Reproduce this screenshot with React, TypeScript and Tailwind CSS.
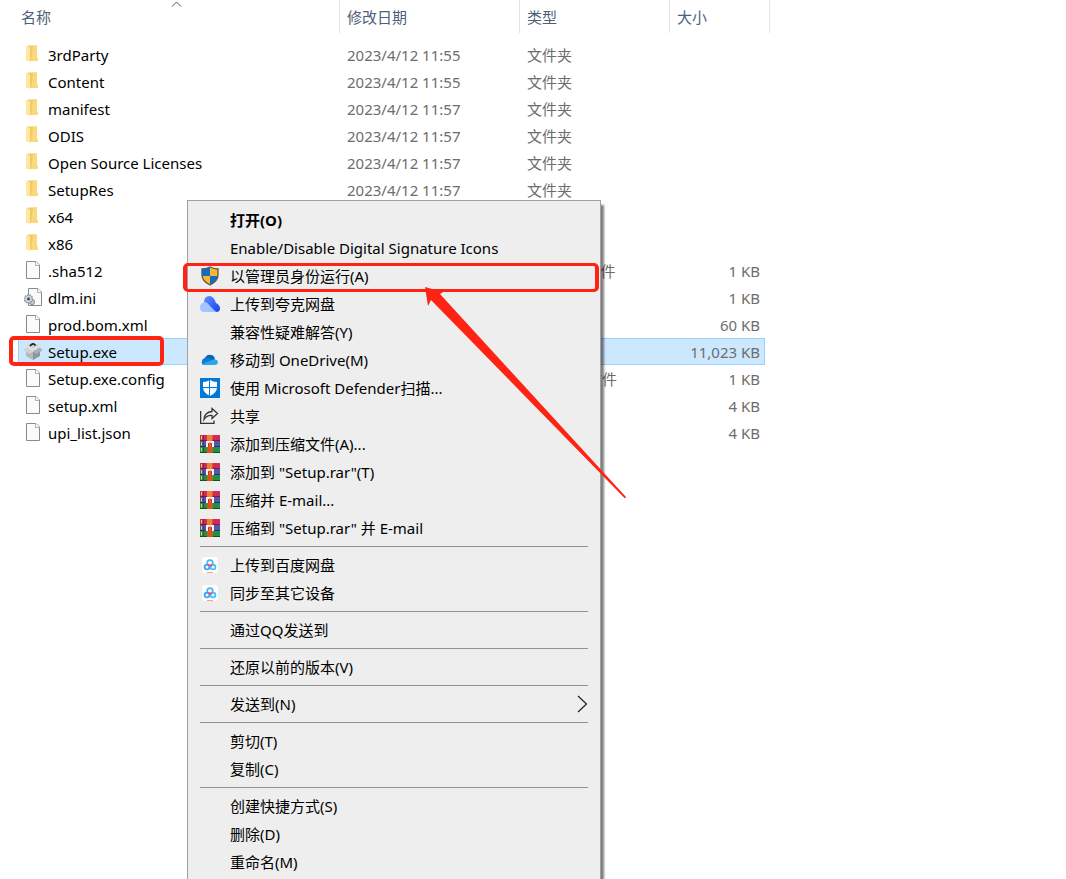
import { ReactNode } from "react";
import clsx from "clsx";

type FileRow = {
  name: string;
  icon: ReactNode;
  date: string;
  type: string;
  size?: string;
};

type MenuItem = {
  label: string;
  icon?: ReactNode;
  bold?: boolean;
  submenu?: boolean;
  marked?: boolean;
};

function FolderIcon() {
  return (
    <svg width="16" height="20" viewBox="0 0 16 20">
      <path d="M3 1.500h9v12l1 1.500v2H3z" fill="#f0ca68" />
      <path d="M8 1.500h4v12l1 1.500v2H6z" fill="#f9d97c" />
      <path d="M1 1.500l4 2v15l-1.500-1.500H1z" fill="#ffe7a0" />
    </svg>
  );
}

function PageIcon() {
  return (
    <svg width="16" height="20" viewBox="0 0 16 20">
      <path
        d="M1.5 1.5h9.5l3.5 3.5v13.5h-13z"
        fill="#fbfbfb"
        stroke="#8a8a8a"
      />
      <path d="M10.5 1.5v4h4" fill="#fff" stroke="#9a9a9a" strokeWidth="0.8" />
    </svg>
  );
}

function ConfigIcon() {
  return (
    <svg width="19" height="20" viewBox="-3 0 19 20">
      <path
        d="M1.5 1.5h9.5l3.5 3.5v13.5h-13z"
        fill="#fbfbfb"
        stroke="#8a8a8a"
      />
      <path d="M10.5 1.5v4h4" fill="#fff" stroke="#9a9a9a" strokeWidth="0.8" />
      <circle cx="5" cy="15" r="2.6" fill="#c6cdd3" stroke="#87919a" />
      <circle
        cx="1.5"
        cy="12"
        r="4"
        fill="#cfd6dc"
        stroke="#87919a"
        strokeWidth="1.5"
        strokeDasharray="1.6 0.8"
      />
      <circle cx="1.5" cy="12" r="1.4" fill="#3c4043" />
    </svg>
  );
}

function SetupIcon() {
  return (
    <svg width="20" height="20" viewBox="0 0 20 20">
      <path d="M3 4l7-3 7 3v4l-7 3-7-3z" fill="#dfe1e3" />
      <path d="M4 4.500l6 2.500 6-2.500-6-2.500z" fill="#c9cdd1" />
      <path d="M7 5q3-4 5.500-.5" fill="none" stroke="#1c1f22" strokeWidth="1.6" />
      <path d="M3 8l7 3v8l-7-4z" fill="#b4b9be" />
      <path d="M17 8l-7 3v8l7-4z" fill="#8e959c" />
      <path d="M3 6.500l7 3.500-3 3-6.500-3.500z" fill="#cdd1d5" />
      <path d="M17 6.500l-7 3.500 3 3 6.500-3.500z" fill="#a9b0b6" />
    </svg>
  );
}

function ShieldIcon() {
  return (
    <svg width="20" height="20" viewBox="0 0 20 20">
      <path d="M10 1q4 2 8 2v6q0 6-8 10z" fill="#ffb62b" />
      <path d="M10 1q-4 2-8 2v6q0 6 8 10z" fill="#0f6cc9" />
      <path d="M10 10h8q-1 5-8 9z" fill="#0f6cc9" />
      <path d="M10 10H2q1 5 8 9z" fill="#ffb62b" />
      <path
        d="M10 1q4 2 8 2v6q0 6-8 10-8-4-8-10V3q4 0 8-2z"
        fill="none"
        stroke="#565656"
        strokeWidth="1.3"
      />
    </svg>
  );
}

function QuarkIcon() {
  return (
    <svg width="20" height="20" viewBox="0 0 20 20">
      <defs>
        <linearGradient id="quark" x1="0" y1="0" x2="1" y2="1">
          <stop offset="0" stopColor="#5a93ff" />
          <stop offset="1" stopColor="#1d3df5" />
        </linearGradient>
      </defs>
      <path
        d="M4 9q0-7 5.500-7 4 0 6.500 7 4 2 4 5.500 0 3.500-4 3.500l-5-3z"
        fill="url(#quark)"
      />
      <path d="M4.500 8q3 0 5.500 4l6 6H4q-4 0-4-4.500Q0 9 4.500 8z" fill="#a5c4ff" />
    </svg>
  );
}

function OneDriveIcon() {
  return (
    <svg width="20" height="20" viewBox="0 0 20 20">
      <path d="M5 8q2-4 6-3 3 0 4 4l-7 6H4q-2-1-2-3 0-3 3-4z" fill="#0866b9" />
      <path d="M5 8q3-1 5 1l4 2-11 4q-2-2-1-4 1-3 3-3z" fill="#0f7cd5" />
      <path d="M12 10q5-2 6 2 0 3-4 3H5q-2 0-2.500-1z" fill="#28a8ea" />
    </svg>
  );
}

function DefenderIcon() {
  return (
    <svg width="20" height="20" viewBox="0 0 20 20">
      <path d="M0 0h20v20H0z" fill="#0078d7" />
      <path d="M10 2q3 2 7 2v5q0 6-7 9-7-3-7-9V4q4 0 7-2z" fill="#fff" />
      <path d="M9.500 2v16M3 9.500h14" stroke="#0078d7" />
    </svg>
  );
}

function ShareIcon() {
  return (
    <svg
      width="20"
      height="20"
      viewBox="0 0 20 20"
      fill="none"
      stroke="#333"
      strokeWidth="1.3"
    >
      <path d="M.6 5v12.4h13.400V14.500" />
      <path d="M12 2.500l5.500 5-5.500 5V9.500q-5-.5-8 4 .5-7.500 8-8z" />
    </svg>
  );
}

function RarIcon() {
  return (
    <svg width="20" height="20" viewBox="0 0 20 20">
      <path d="M0 1h20v5H0z" fill="#cf2b55" />
      <path d="M0 7h20v5H0z" fill="#5554b5" />
      <path d="M0 13h20v5H0z" fill="#1b9444" />
      <path d="M0 6h20v1H0z" fill="#8c1238" />
      <path d="M0 12h20v1H0z" fill="#2e2d72" />
      <path d="M0 18h20v1H0z" fill="#0e5226" />
      <path d="M3.500 1v17" stroke="#2b2540" strokeOpacity="0.5" />
      <path d="M1.500 2v3.500M1.500 8v3.500M1.500 14v3.500" stroke="#f5d02f" />
      <path d="M7 1h5.500v18H7z" fill="#f08030" />
      <path d="M7 13h5.500v6H7z" fill="#d9541c" />
      <path d="M6 7h8v6H6z" fill="#f3f3f3" />
      <path d="M8 9h1v4H8zM11 9h1v4h-1z" fill="#c9332a" />
      <path d="M9 8.500h2V13H9z" fill="#e0612a" />
    </svg>
  );
}

function BaiduIcon() {
  return (
    <svg width="20" height="20" viewBox="0 0 20 20" fill="none">
      <rect x="2" y="2" width="16" height="16" rx="3" fill="#fff" />
      <circle cx="10" cy="8" r="2.8" stroke="#45b7f7" strokeWidth="1.7" />
      <circle cx="7" cy="12" r="2.4" stroke="#38a4f8" strokeWidth="1.8" />
      <circle cx="13" cy="12" r="2.4" stroke="#38c6f8" strokeWidth="1.8" />
      <path d="M8 9.500l2 1.500 2-1.500" stroke="#f4506c" strokeWidth="1.7" />
      <path d="M7 17.500h6" stroke="#ff9b9b" />
    </svg>
  );
}

const files: FileRow[] = [
  { name: "3rdParty", icon: <FolderIcon />, date: "2023/4/12 11:55", type: "文件夹" },
  { name: "Content", icon: <FolderIcon />, date: "2023/4/12 11:55", type: "文件夹" },
  { name: "manifest", icon: <FolderIcon />, date: "2023/4/12 11:57", type: "文件夹" },
  { name: "ODIS", icon: <FolderIcon />, date: "2023/4/12 11:57", type: "文件夹" },
  { name: "Open Source Licenses", icon: <FolderIcon />, date: "2023/4/12 11:57", type: "文件夹" },
  { name: "SetupRes", icon: <FolderIcon />, date: "2023/4/12 11:57", type: "文件夹" },
  { name: "x64", icon: <FolderIcon />, date: "", type: "" },
  { name: "x86", icon: <FolderIcon />, date: "", type: "" },
  { name: ".sha512", icon: <PageIcon />, date: "", type: "SHA512 文件", size: "1 KB" },
  { name: "dlm.ini", icon: <ConfigIcon />, date: "", type: "", size: "1 KB" },
  { name: "prod.bom.xml", icon: <PageIcon />, date: "", type: "", size: "60 KB" },
  { name: "Setup.exe", icon: <SetupIcon />, date: "", type: "", size: "11,023 KB" },
  { name: "Setup.exe.config", icon: <PageIcon />, date: "", type: "CONFIG 文件", size: "1 KB" },
  { name: "setup.xml", icon: <PageIcon />, date: "", type: "", size: "4 KB" },
  { name: "upi_list.json", icon: <PageIcon />, date: "", type: "", size: "4 KB" },
];

const menuGroups: MenuItem[][] = [
  [
    { label: "打开(O)", bold: true },
    { label: "Enable/Disable Digital Signature Icons" },
    { label: "以管理员身份运行(A)", icon: <ShieldIcon />, marked: true },
    { label: "上传到夸克网盘", icon: <QuarkIcon /> },
    { label: "兼容性疑难解答(Y)" },
    { label: "移动到 OneDrive(M)", icon: <OneDriveIcon /> },
    { label: "使用 Microsoft Defender扫描...", icon: <DefenderIcon /> },
    { label: "共享", icon: <ShareIcon /> },
    { label: "添加到压缩文件(A)...", icon: <RarIcon /> },
    { label: '添加到 "Setup.rar"(T)', icon: <RarIcon /> },
    { label: "压缩并 E-mail...", icon: <RarIcon /> },
    { label: '压缩到 "Setup.rar" 并 E-mail', icon: <RarIcon /> },
  ],
  [
    { label: "上传到百度网盘", icon: <BaiduIcon /> },
    { label: "同步至其它设备", icon: <BaiduIcon /> },
  ],
  [{ label: "通过QQ发送到" }],
  [{ label: "还原以前的版本(V)" }],
  [{ label: "发送到(N)", submenu: true }],
  [{ label: "剪切(T)" }, { label: "复制(C)" }],
  [{ label: "创建快捷方式(S)" }, { label: "删除(D)" }, { label: "重命名(M)" }],
];

function FileTable() {
  const selected = "Setup.exe";

  return (
    <table className="ml-[18px] w-[752px] table-fixed border-separate border-spacing-0 text-left">
      <colgroup>
        <col className="w-[322px]" />
        <col className="w-[180px]" />
        <col className="w-[150px]" />
        <col className="w-[95px]" />
        <col className="w-[5px]" />
      </colgroup>
      <thead className="text-[#4c607a]">
        <tr className="h-[33px]">
          <th className="relative border-r border-[#e5e5e5] p-0 pl-[3px] font-normal">
            名称
            <svg
              className="absolute top-0 left-[153px]"
              width="11"
              height="8"
              viewBox="0 0 11 8"
            >
              <path d="M1 6.500l4.500-4.500 4.500 4.500" fill="none" stroke="#555" />
            </svg>
          </th>
          <th className="border-r border-[#e5e5e5] p-0 pl-[7px] font-normal">修改日期</th>
          <th className="border-r border-[#e5e5e5] p-0 pl-[7px] font-normal">类型</th>
          <th colSpan={2} className="border-r border-[#e5e5e5] p-0 pl-[7px] font-normal">
            大小
          </th>
        </tr>
      </thead>
      <tbody className="text-[#6d6d6d]">
        <tr className="h-2">
          <td colSpan={5} className="p-0" />
        </tr>
        {files.map((file) => {
          const cell = clsx(
            "border-y p-0",
            file.name === selected
              ? "border-[#99d1ff] bg-[#cce8ff]"
              : "border-transparent"
          );

          return (
            <tr key={file.name} className="h-[27px]">
              <td className={clsx(cell, "relative border-l")}>
                <div className="flex items-center">
                  <span className="flex w-[29px] justify-center pr-px pb-px">{file.icon}</span>
                  <span className="text-black">{file.name}</span>
                </div>
                {file.name === selected && (
                  <div className="absolute -top-[3px] -left-[10px] h-[30px] w-[155px] rounded-[5px] border-4 border-[#ff2313]" />
                )}
              </td>
              <td className={clsx(cell, "pl-[7px]")}>{file.date}</td>
              <td className={clsx(cell, "pl-[7px]")}>{file.type}</td>
              <td className={clsx(cell, "border-r pr-1 text-right")}>{file.size}</td>
              <td className="p-0" />
            </tr>
          );
        })}
      </tbody>
    </table>
  );
}

function ContextMenu() {
  return (
    <div className="absolute top-[200px] left-[187px] w-[414px] border border-[#a0a0a0] bg-[#eee] px-3 py-[5px] text-black shadow-[3px_5px_2px_rgba(0,0,0,0.5)]">
      {menuGroups.map((group, index) => (
        <div key={index}>
          {index > 0 && <hr className="my-1 border-[#919191]" />}
          {group.map((item) => (
            <button
              key={item.label}
              className={clsx(
                "relative flex h-7 w-full items-center text-left",
                item.bold && "font-bold"
              )}
            >
              <span className="w-[30px]">{item.icon}</span>
              <span className="flex-1">{item.label}</span>
              {item.submenu && (
                <svg width="11" height="18" viewBox="0 0 11 18">
                  <path d="M1 1l8.500 8-8.500 8" fill="none" stroke="#123" strokeWidth="1.2" />
                </svg>
              )}
              {item.marked && (
                <span className="absolute top-px -left-[17px] h-[29px] w-[416px] rounded-[5px] border-x-4 border-y-3 border-[#ff2313]" />
              )}
            </button>
          ))}
        </div>
      ))}
    </div>
  );
}

export default function App() {
  return (
    <div className="relative h-screen overflow-hidden bg-white font-['Noto_Sans','Noto_Sans_CJK_SC',sans-serif] text-[15px] leading-5">
      <FileTable />
      <ContextMenu />
      <svg
        className="absolute top-[287px] left-[424px]"
        width="203"
        height="212"
        viewBox="0 0 203 212"
      >
        <path d="M1 0l18 5-3 2 186 203-1 1.500L7 13l-3 6z" fill="#ff2313" />
      </svg>
    </div>
  );
}
